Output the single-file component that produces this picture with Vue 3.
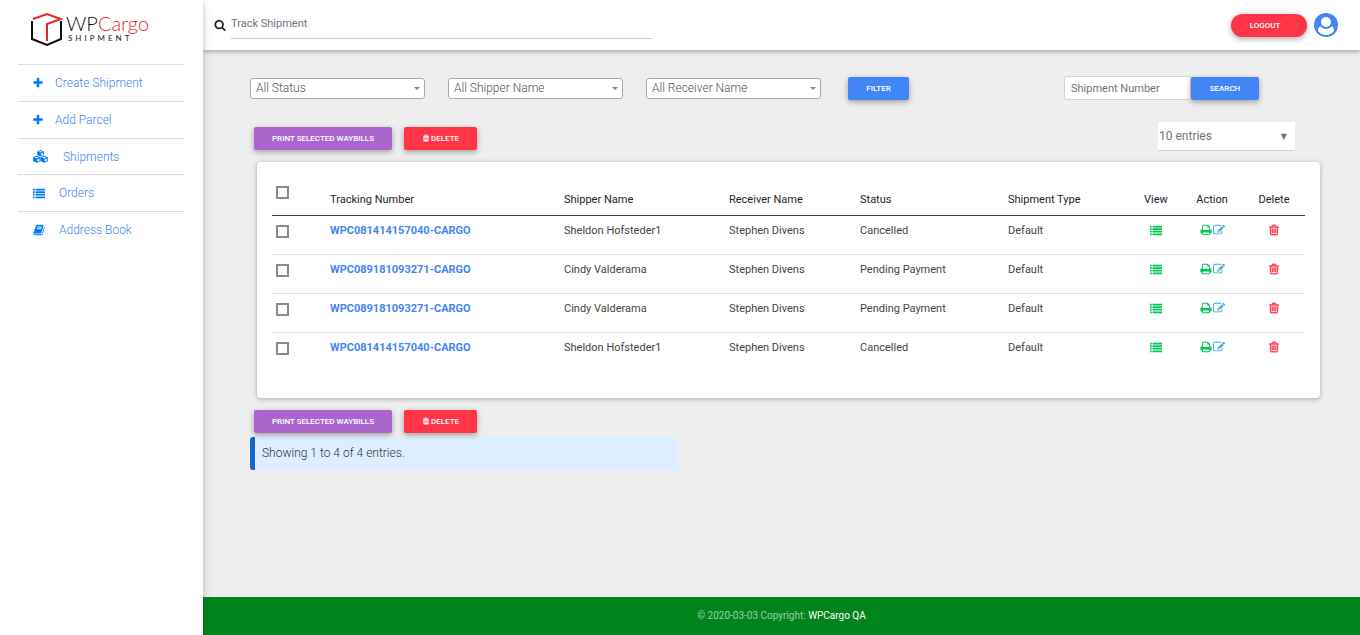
<script setup>
import { ref, computed, h } from 'vue'

const paths = {
  search: 'M1216 832q0-185-131.5-316.5t-316.5-131.5-316.5 131.5-131.5 316.5 131.5 316.5 316.5 131.5 316.5-131.5 131.5-316.5zm512 832q0 52-38 90t-90 38q-54 0-90-38l-343-342q-179 124-399 124-143 0-273.5-55.5t-225-150-150-225-55.5-273.5 55.5-273.5 150-225 225-150 273.5-55.5 273.5 55.5 225 150 150 225 55.5 273.5q0 220-124 399l343 343q37 37 37 90z',
  plus: 'M1600 736v192q0 40-28 68t-68 28h-416v416q0 40-28 68t-68 28h-192q-40 0-68-28t-28-68v-416h-416q-40 0-68-28t-28-68v-192q0-40 28-68t68-28h416v-416q0-40 28-68t68-28h192q40 0 68 28t28 68v416h416q40 0 68 28t28 68z',
  cubes: 'M896 130l400 160v430l-400 180-400-180v-430zM896 240l-240 90 240 95 240-95zM960 530v240l220-95v-240zM450 820l430 170v470l-430 190-430-190v-470zM450 935l-250 95 250 100 250-100zM515 1240v255l245-105v-255zM1342 820l430 170v470l-430 190-430-190v-470zM1342 935l-250 95 250 100 250-100zM1407 1240v255l245-105v-255z',
  list: 'M0 256h256v256h-256zM384 256h1408v256h-1408zM0 640h256v256h-256zM384 640h1408v256h-1408zM0 1024h256v256h-256zM384 1024h1408v256h-1408zM0 1408h256v256h-256zM384 1408h1408v256h-1408z',
  book: 'M1703 478q40 57 18 129l-275 906q-19 64-76.5 107.5t-122.5 43.5h-923q-77 0-148.5-53.5t-99.5-131.5q-24-67-2-127 0-4 3-27t4-37q1-8-3-21.5t-3-19.5q2-11 8-21t16.5-23.5 16.5-23.5q23-38 45-91.5t30-91.5q3-10 .5-30t-.5-28q3-11 17-28t17-23q21-36 42-92t25-90q1-9-2.5-32t.5-28q4-13 22-30.5t22-22.5q19-26 42.5-84.5t27.5-96.5q1-8-3-25.5t-2-26.5q2-8 9-18t18-23 17-21q8-12 16.5-30.5t15-35 16-36 19.5-32 26.5-23.5 36-11.5 47.5 5.5l-1 3q38-9 51-9h761q74 0 114 56t18 130l-274 906q-36 119-71.5 153.5t-128.5 34.5h-869q-27 0-38 15-11 16-1 43 24 70 144 70h923q29 0 56-15.5t35-41.5l300-987q7-22 5-57 38 15 59 43zm-1064 2q-4 13 2 22.5t20 9.5h608q13 0 25.5-9.5t16.5-22.5l21-64q4-13-2-22.5t-20-9.5h-608q-13 0-25.5 9.5t-16.5 22.5zm-83 256q-4 13 2 22.5t20 9.5h608q13 0 25.5-9.5t16.5-22.5l21-64q4-13-2-22.5t-20-9.5h-608q-13 0-25.5 9.5t-16.5 22.5z',
  print: 'M448 1536h896v-256h-896v256zm0-640h896v-384h-160q-40 0-68-28t-28-68v-160h-640v640zm1152 64q0-26-19-45t-45-19-45 19-19 45 19 45 45 19 45-19 19-45zm128 0v416q0 13-9.5 22.5t-22.5 9.5h-224v160q0 40-28 68t-68 28h-960q-40 0-68-28t-28-68v-160h-224q-13 0-22.5-9.5t-9.5-22.5v-416q0-79 56.5-135.5t135.5-56.5h64v-544q0-40 28-68t68-28h672q40 0 88 20t76 48l152 152q28 28 48 76t20 88v256h64q79 0 135.5 56.5t56.5 135.5z',
  edit: 'M888 1184l116-116-152-152-116 116v56h96v96h56zm440-720q-16-16-33 1l-350 350q-17 17-1 33t33-1l350-350q17-17 1-33zm80 594v190q0 119-84.5 203.5t-203.5 84.5h-832q-119 0-203.5-84.5t-84.5-203.5v-832q0-119 84.5-203.5t203.5-84.5h832q63 0 117 25 15 7 18 23 3 17-9 29l-49 49q-14 14-32 8-23-6-45-6h-832q-66 0-113 47t-47 113v832q0 66 47 113t113 47h832q66 0 113-47t47-113v-126q0-13 9-22l64-64q15-15 35-7t20 29zm-96-738l288 288-672 672h-288v-288zm444 132l-92 92-288-288 92-92q28-28 68-28t68 28l152 152q28 28 28 68t-28 68z',
  trash: 'M704 736v576q0 14-9 23t-23 9h-64q-14 0-23-9t-9-23v-576q0-14 9-23t23-9h64q14 0 23 9t9 23zm256 0v576q0 14-9 23t-23 9h-64q-14 0-23-9t-9-23v-576q0-14 9-23t23-9h64q14 0 23 9t9 23zm256 0v576q0 14-9 23t-23 9h-64q-14 0-23-9t-9-23v-576q0-14 9-23t23-9h64q14 0 23 9t9 23zm-544-352h448l-48-117q-7-9-17-11h-317q-10 2-17 11zm928 32v64q0 14-9 23t-23 9h-96v948q0 83-47 143.5t-113 60.5h-832q-66 0-113-58.5t-47-141.5v-952h-96q-14 0-23-9t-9-23v-64q0-14 9-23t23-9h309l70-167q15-37 54-63t79-26h320q40 0 79 26t54 63l70 167h309q14 0 23 9t9 23z',
  trashOpen: 'M704 736v576q0 14-9 23t-23 9h-64q-14 0-23-9t-9-23v-576q0-14 9-23t23-9h64q14 0 23 9t9 23zm256 0v576q0 14-9 23t-23 9h-64q-14 0-23-9t-9-23v-576q0-14 9-23t23-9h64q14 0 23 9t9 23zm256 0v576q0 14-9 23t-23 9h-64q-14 0-23-9t-9-23v-576q0-14 9-23t23-9h64q14 0 23 9t9 23zm128 724v-948h-896v948q0 22 7 40.5t14.5 27 10.5 8.5h832q3 0 10.5-8.5t14.5-27 7-40.5zm-672-1076h448l-48-117q-7-9-17-11h-317q-10 2-17 11zm928 32v64q0 14-9 23t-23 9h-96v948q0 83-47 143.5t-113 60.5h-832q-66 0-113-58.5t-47-141.5v-952h-96q-14 0-23-9t-9-23v-64q0-14 9-23t23-9h309l70-167q15-37 54-63t79-26h320q40 0 79 26t54 63l70 167h309q14 0 23 9t9 23z'
}

const Icon = (props) =>
  h('svg', { viewBox: '0 0 1792 1792', 'aria-hidden': 'true' }, [
    h('path', { d: paths[props.name], fill: 'currentColor', 'fill-rule': 'evenodd' })
  ])
Icon.props = ['name']

const menu = [
  { label: 'Create Shipment', icon: 'plus' },
  { label: 'Add Parcel', icon: 'plus' },
  { label: 'Shipments', icon: 'cubes', mod: 'wide' },
  { label: 'Orders', icon: 'list', mod: 'mid' },
  { label: 'Address Book', icon: 'book', mod: 'mid' }
]
const filters = ['All Status', 'All Shipper Name', 'All Receiver Name']
const rows = ref([
  { id: 'WPC081414157040-CARGO', shipper: 'Sheldon Hofsteder1', receiver: 'Stephen Divens', status: 'Cancelled', type: 'Default', on: false },
  { id: 'WPC089181093271-CARGO', shipper: 'Cindy Valderama', receiver: 'Stephen Divens', status: 'Pending Payment', type: 'Default', on: false },
  { id: 'WPC089181093271-CARGO', shipper: 'Cindy Valderama', receiver: 'Stephen Divens', status: 'Pending Payment', type: 'Default', on: false },
  { id: 'WPC081414157040-CARGO', shipper: 'Sheldon Hofsteder1', receiver: 'Stephen Divens', status: 'Cancelled', type: 'Default', on: false }
])
const all = computed({
  get: () => rows.value.every((r) => r.on),
  set: (v) => rows.value.forEach((r) => { r.on = v })
})
</script>

<template>
  <div class="app">
    <aside class="sidebar">
      <a class="logo" href="#">
        <svg class="cube" viewBox="0 0 32 34" fill="none" stroke-width="2" aria-hidden="true">
          <path d="M1 9v18l15 6 14-6V9" stroke="#111" />
          <path d="M2 7L16 2l14 5-14 5v17" stroke="#e5252c" />
        </svg>
        <span class="brand">
          <span class="name">WP<span class="red">Cargo</span></span>
          <span class="sub">SHIPMENT</span>
        </span>
      </a>
      <nav class="menu">
        <a v-for="m in menu" :key="m.label" href="#" class="item" :class="m.mod">
          <Icon :name="m.icon" class="mi" /><span>{{ m.label }}</span>
        </a>
      </nav>
    </aside>

    <div class="main">
      <header class="topbar">
        <label class="track" for="track"><Icon name="search" class="si" /></label>
        <input id="track" class="track-input" type="text" placeholder="Track Shipment" aria-label="Track Shipment" />
        <button class="btn red-btn logout" type="button">LOGOUT</button>
        <a class="user" href="#" aria-label="Profile">
          <svg viewBox="0 0 24 24" aria-hidden="true">
            <circle cx="12" cy="12" r="12" fill="#4285f4" />
            <path d="M4 18q0-5 4-5h8q4 0 4 5q-3 4-8 4t-8-4z" fill="#fff" />
            <circle cx="12" cy="9" r="6" fill="#fff" stroke="#4285f4" stroke-width="2" />
          </svg>
        </a>
      </header>

      <main class="content">
        <form class="filters" @submit.prevent>
          <div v-for="f in filters" :key="f" class="pick">
            <select :aria-label="f"><option>{{ f }}</option></select>
          </div>
          <button class="btn blue-btn filter" type="submit">FILTER</button>
          <div class="find">
            <input type="text" placeholder="Shipment Number" aria-label="Shipment Number" />
            <button class="btn blue-btn" type="button">SEARCH</button>
          </div>
        </form>

        <div class="tools">
          <button class="btn purple-btn" type="button">PRINT SELECTED WAYBILLS</button>
          <button class="btn red-btn del" type="button"><Icon name="trash" class="ti" />DELETE</button>
          <div class="entries">
            <select aria-label="Entries per page"><option>10 entries</option></select>
            <span class="tri">▼</span>
          </div>
        </div>

        <section class="card">
          <table>
            <colgroup>
              <col class="c-check" /><col class="c-track" /><col class="c-ship" /><col class="c-recv" />
              <col class="c-stat" /><col class="c-type" /><col class="c-view" /><col class="c-act" /><col class="c-act" />
            </colgroup>
            <thead>
              <tr>
                <th class="top"><input v-model="all" type="checkbox" aria-label="Select all" /></th>
                <th>Tracking Number</th>
                <th>Shipper Name</th>
                <th>Receiver Name</th>
                <th>Status</th>
                <th>Shipment Type</th>
                <th class="mid">View</th>
                <th class="mid">Action</th>
                <th class="mid">Delete</th>
              </tr>
            </thead>
            <tbody>
              <tr v-for="(r, i) in rows" :key="i">
                <td><input v-model="r.on" type="checkbox" :aria-label="'Select ' + r.id" /></td>
                <td><a href="#" class="num">{{ r.id }}</a></td>
                <td>{{ r.shipper }}</td>
                <td>{{ r.receiver }}</td>
                <td>{{ r.status }}</td>
                <td>{{ r.type }}</td>
                <td><a href="#" class="acts green" aria-label="View"><Icon name="list" class="ri" /></a></td>
                <td>
                  <span class="acts">
                    <a href="#" class="green" aria-label="Print"><Icon name="print" class="ri" /></a>
                    <a href="#" class="sky" aria-label="Edit"><Icon name="edit" class="ri" /></a>
                  </span>
                </td>
                <td><a href="#" class="acts danger" aria-label="Delete"><Icon name="trashOpen" class="ri" /></a></td>
              </tr>
            </tbody>
          </table>
        </section>

        <div class="tools lower">
          <button class="btn purple-btn" type="button">PRINT SELECTED WAYBILLS</button>
          <button class="btn red-btn del" type="button"><Icon name="trash" class="ti" />DELETE</button>
        </div>
        <p class="note">Showing 1 to 4 of 4 entries.</p>
      </main>

      <footer class="footer">© 2020-03-03 Copyright: <a href="#">WPCargo QA</a></footer>
    </div>
  </div>
</template>

<style>
body {
  background: #eee;
}
</style>

<style scoped>
.app,
.app * {
  box-sizing: border-box;
}
.app {
  display: flex;
  min-height: 100vh;
  font-family: Roboto, "Liberation Sans", sans-serif;
  font-size: 11px;
  color: #444;
}
a {
  text-decoration: none;
}
input,
select,
button {
  font-family: inherit;
  margin: 0;
}
.sidebar {
  flex: 0 0 203px;
  background: #fff;
  padding: 12px 18px;
  box-shadow: 0 2px 5px rgba(0, 0, 0, 0.16), 0 2px 10px rgba(0, 0, 0, 0.12);
  position: relative;
  z-index: 2;
}
.logo {
  display: flex;
  height: 52px;
  padding-left: 13px;
  gap: 3px;
}
.cube {
  width: 32px;
  height: 34px;
}
.brand {
  display: flex;
  flex-direction: column;
}
.name {
  font: 300 20px/22px Lato, sans-serif;
  color: #111;
}
.red {
  color: #e5252c;
}
.sub {
  font: 400 8px/8px Lato, sans-serif;
  letter-spacing: 3px;
  padding-left: 2px;
  color: #222;
}
.item {
  display: flex;
  align-items: center;
  height: 37px;
  padding-left: 14px;
  gap: 11px;
  border-top: 1px solid #dedede;
  font-size: 12px;
  font-weight: 300;
  color: #4285f4;
}
.mi {
  width: 12px;
  height: 12px;
  color: #007bff;
}
.item.mid,
.item.wide {
  padding-left: 15px;
}
.item.mid .mi {
  margin-right: 3px;
}
.item.wide {
  height: 36px;
}
.item.wide .mi {
  width: 15px;
  height: 15px;
  margin-right: 4px;
}
.main {
  flex: 1;
  min-width: 0;
  display: flex;
  flex-direction: column;
  background: #eee;
}
.topbar {
  height: 50px;
  background: #fff;
  display: flex;
  align-items: center;
  padding: 0 22px 0 11px;
  box-shadow: 0 2px 4px rgba(0, 0, 0, 0.28);
}
.track {
  display: flex;
  margin-right: 5px;
}
.si {
  width: 12px;
  height: 12px;
  color: #222;
}
.track-input {
  width: 421px;
  height: 28px;
  border: 0;
  border-bottom: 1px solid #ccc;
  padding: 0 0 2px;
  outline: 0;
  background: transparent;
  font-size: 11px;
  color: #495057;
}
input::placeholder {
  color: #6c757d;
  opacity: 1;
}
.btn {
  height: 23px;
  border: 0;
  border-radius: 2px;
  padding: 0;
  color: #fff;
  font-size: 8px;
  font-weight: 500;
  box-shadow: 0 2px 5px rgba(0, 0, 0, 0.25), 0 2px 8px rgba(0, 0, 0, 0.1);
}
.blue-btn {
  background: #4285f4;
}
.red-btn {
  background: #ff3547;
}
.purple-btn {
  background: #a6c;
  width: 138px;
}
.logout {
  margin-left: auto;
  width: 76px;
  border-radius: 12px;
  padding-right: 8px;
}
.user {
  display: flex;
  margin-left: 7px;
}
.user svg {
  width: 24px;
  height: 24px;
}
.content {
  flex: 1;
  padding: 26px 40px 20px 47px;
}
.filters {
  display: flex;
  align-items: center;
  height: 24px;
}
.pick {
  position: relative;
  width: 175px;
  margin-right: 23px;
}
.pick::after {
  content: "";
  position: absolute;
  right: 5px;
  top: 9px;
  border: 3px solid transparent;
  border-top-color: #888;
  border-bottom: 0;
  pointer-events: none;
}
.pick select {
  display: block;
  appearance: none;
  width: 100%;
  height: 21px;
  border: 1px solid #aaa;
  border-radius: 3px;
  background: #fff;
  padding: 0 5px;
  font-size: 12px;
  font-weight: 300;
  color: #555;
}
.filter {
  width: 61px;
  margin-left: 4px;
}
.find {
  display: flex;
  align-items: center;
  margin-left: auto;
  margin-right: 61px;
}
.find input {
  width: 127px;
  height: 24px;
  border: 1px solid #ced4da;
  border-radius: 2px;
  padding: 0 6px;
  font-size: 11px;
  background: #fff;
}
.find .btn {
  width: 68px;
}
.tools {
  display: flex;
  align-items: center;
  gap: 12px;
  padding-left: 4px;
  height: 32px;
  margin-top: 22px;
}
.del {
  width: 73px;
}
.ti {
  width: 8px;
  height: 8px;
  vertical-align: -1px;
  margin-right: 1px;
}
.entries {
  position: relative;
  align-self: flex-start;
  width: 137px;
  margin-left: auto;
  margin-right: 25px;
}
.entries select {
  display: block;
  appearance: none;
  width: 100%;
  height: 29px;
  border: 0;
  border-bottom: 1px solid #ced4da;
  border-radius: 0;
  padding: 0 1px;
  background: #fff;
  font-size: 12px;
  color: #6c757d;
}
.tri {
  position: absolute;
  right: 8px;
  top: 9px;
  font: 8px/12px "DejaVu Sans", sans-serif;
  color: #6c757d;
  pointer-events: none;
}
.card {
  margin: 8px 0 0 7px;
  padding: 15px 15px 27px;
  background: #fff;
  border-radius: 4px;
  box-shadow: 0 1px 5px rgba(0, 0, 0, 0.3);
}
table {
  width: 100%;
  table-layout: fixed;
  border-collapse: collapse;
}
.c-check { width: 54px; }
.c-track { width: 234px; }
.c-ship { width: 165px; }
.c-recv { width: 131px; }
.c-stat { width: 148px; }
.c-type { width: 127px; }
.c-view { width: 50px; }
.c-act { width: 62px; }
th {
  height: 38px;
  padding: 0 4px 7px;
  vertical-align: bottom;
  text-align: left;
  font-weight: 400;
  line-height: 16px;
  color: #212529;
  border-bottom: 1px solid #444;
}
th.top {
  vertical-align: top;
  padding-top: 9px;
}
td {
  height: 39px;
  padding: 7px 4px 0;
  vertical-align: top;
  line-height: 16px;
  border-bottom: 1px solid #dee2e6;
}
tbody tr:last-child td {
  border-bottom: 0;
}
th.mid {
  text-align: center;
  padding-left: 0;
  padding-right: 0;
}
input[type="checkbox"] {
  appearance: none;
  display: block;
  width: 13px;
  height: 13px;
  border: 2px solid #8a8a8a;
  background: #fff;
}
input[type="checkbox"]:checked {
  background: #4285f4;
}
td input[type="checkbox"] {
  margin-top: 2px;
}
.num {
  font-weight: 700;
  color: #4285f4;
}
.ri {
  display: block;
  width: 12px;
  height: 12px;
}
.acts {
  display: flex;
  justify-content: center;
  align-items: center;
  gap: 1px;
  height: 14px;
}
.green { color: #00c851; }
.sky { color: #33a5e5; }
.danger { color: #ff3547; }
.danger .ri {
  stroke: currentColor;
  stroke-width: 60px;
}
.lower {
  height: 23px;
  margin-top: 12px;
}
.note {
  width: 40%;
  min-width: 200px;
  margin: 4px 0 0;
  padding: 0 7px;
  line-height: 33px;
  background: #def;
  border-left: 5px solid #1269c7;
  border-radius: 3px;
  font-size: 12px;
  font-weight: 300;
  color: #333;
}
.footer {
  height: 38px;
  line-height: 37px;
  text-align: center;
  background: #00851c;
  color: rgba(255, 255, 255, 0.6);
  font-size: 10px;
}
.footer a {
  color: #fff;
}
</style>
